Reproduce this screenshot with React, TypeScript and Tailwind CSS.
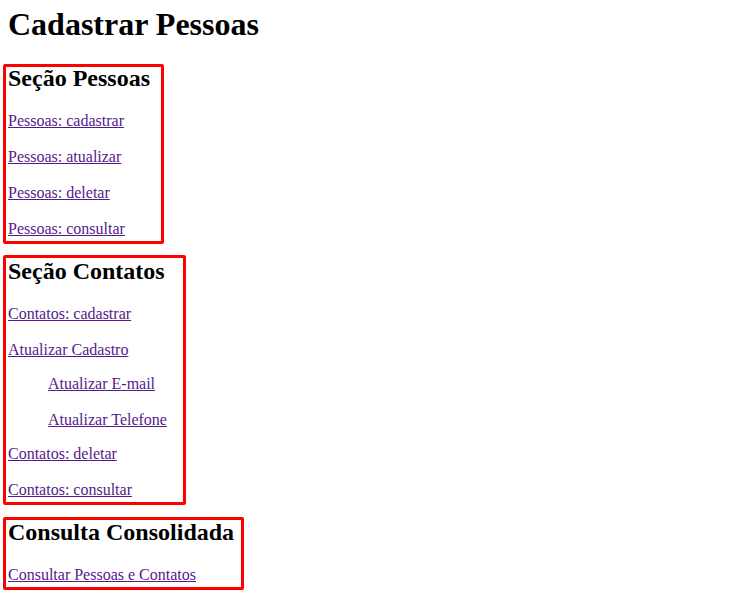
import type { ReactNode } from "react";

function Section({ title, className, children }: { title: string; className: string; children: ReactNode }) {
  return (
    <section className={`${className} rounded-xs border-3 border-[#ff0000] px-0.5 pb-[3px]`}>
      <h2 className="mb-[23px] text-2xl leading-[22px] font-bold whitespace-nowrap">{title}</h2>
      {children}
    </section>
  );
}

function Item({ children }: { children: string }) {
  return (
    <li>
      <a href="#" className="text-[#551a8b] underline">
        {children}
      </a>
    </li>
  );
}

export default function App() {
  return (
    <main className="bg-white px-[3px] pt-1.5 font-['Liberation_Serif',serif] text-base leading-[18px] text-black">
      <h1 className="px-[5px] text-[32px] leading-9 font-bold">Cadastrar Pessoas</h1>
      <Section title="Seção Pessoas" className="mt-[22px] w-[161px]">
        <ul className="flex flex-col gap-[18px]">
          <Item>Pessoas: cadastrar</Item>
          <Item>Pessoas: atualizar</Item>
          <Item>Pessoas: deletar</Item>
          <Item>Pessoas: consultar</Item>
        </ul>
      </Section>
      <Section title="Seção Contatos" className="mt-[11px] w-[183px] pt-0.5">
        <ul className="flex flex-col gap-[18px]">
          <Item>Contatos: cadastrar</Item>
          <Item>Atualizar Cadastro</Item>
        </ul>
        <ul className="my-4 flex flex-col gap-[18px] pl-10">
          <Item>Atualizar E-mail</Item>
          <Item>Atualizar Telefone</Item>
        </ul>
        <ul className="flex flex-col gap-[18px]">
          <Item>Contatos: deletar</Item>
          <Item>Contatos: consultar</Item>
        </ul>
      </Section>
      <Section title="Consulta Consolidada" className="mt-3 w-[241px] pt-px">
        <ul>
          <Item>Consultar Pessoas e Contatos</Item>
        </ul>
      </Section>
    </main>
  );
}
